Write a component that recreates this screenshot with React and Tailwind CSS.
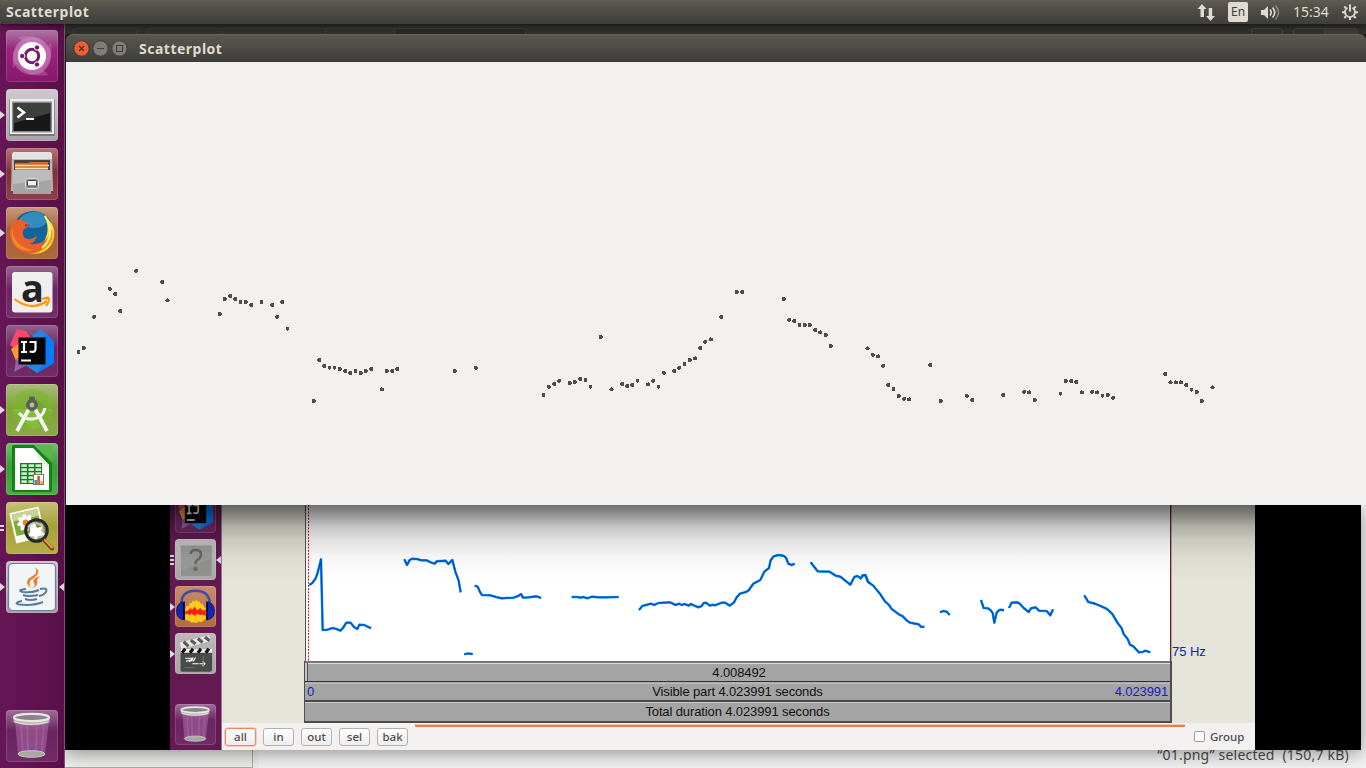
import React from "react";

const SAMPLES = [
  { x: 66, y: 250, pts: [[37,306],[53,294],[84,200],[131,116],[147,132],[162,183],[210,62],[288,96],[304,151],[461,192],[476,147],[492,138],[507,147],[523,156],[539,156],[555,165],[586,156],[618,165],[633,200],[648,156],[664,236],[743,453],[759,330],[774,348],[790,353],[805,353],[821,357],[837,363],[852,369],[868,363],[884,369],[899,363],[915,357],[947,418],[962,363],[978,363],[993,357],[1166,363]] },
  { x: 460, y: 270, pts: [[47,293],[250,375],[266,350],[282,342],[297,332],[329,339],[344,336],[360,327],[376,330],[391,350],[422,201],[454,358],[486,342],[501,348],[516,345],[532,332],[564,343],[579,332],[595,350],[611,308],[642,303],[657,293],[673,282],[689,270],[705,265],[720,234],[735,215],[752,208],[783,141],[830,66],[846,66],[971,87],[987,149],[1002,153],[1018,165],[1034,165],[1049,165],[1065,180],[1080,187],[1097,195],[1112,228]] },
  { x: 840, y: 330, pts: [[82,55],[98,74],[114,79],[129,107],[144,165],[160,177],[176,198],[192,206],[207,208],[270,105],[302,213],[380,197],[396,210],[489,195],[552,185],[567,187],[584,210],[661,191],[677,153],[693,153],[708,156],[725,187],[756,185],[771,187],[787,197],[803,195],[819,203],[975,132],[991,157],[1007,157],[1022,157],[1038,165],[1054,179],[1070,186],[1085,213],[1117,172]] },
];

const CURVES = [
  { x: 160, y: 500, lines: ["448,255 457,249 467,235 473,218 483,178 488,390 503,389 517,384 530,387 541,392 549,384 559,368 572,368 582,381 592,387 598,374 613,375 633,385", "733,178 741,195 749,180 757,176 775,178 785,181 800,181 812,187 824,191 830,184 857,182 865,192 877,180 886,215 896,242 902,277", "913,463 920,461 932,461 938,463"] },
  { x: 470, y: 500, lines: ["14,257 23,260 30,276 36,285 62,286 78,291 95,295 130,293 145,288 153,282 159,293 176,292 200,289 213,294", "305,291 323,291 331,293 340,291 352,295 366,290 385,292 410,292 446,291", "507,330 517,318 543,311 553,315 565,309 600,307 617,315 627,311 635,315 644,312 656,317 662,312 685,322 695,318 700,310 708,308 720,317 728,314 735,316 755,308 765,308 779,317 792,307 800,292 810,281 828,276 836,271 850,251 871,240 883,215 897,204 902,181 911,169 925,165 940,167 948,173 955,191 965,195 974,191", "1022,187 1043,214 1078,215 1097,227 1111,230 1141,254 1153,231 1162,228 1173,235 1179,226 1187,226 1194,244 1200,250"] },
  { x: 860, y: 500, lines: ["0,237 8,226 16,225 24,246 40,257 61,283 75,304 87,315 94,326 118,344 127,348 141,362 150,368 176,373 184,381 193,380", "240,337 250,333 260,335 269,345", "363,300 371,324 384,325 392,331 398,339 403,368 410,338 418,330 424,329 432,331", "447,324 455,308 472,307 479,311 491,324 506,336 513,325 527,322 537,332 560,333 571,346 579,328", "673,286 685,306 705,311 724,319 741,327 757,342 773,369 785,385 791,402 803,417 810,434 820,439 837,457 848,456 856,452 871,457"] },
];

const IntelliJ = () => (
  <>
    <path d="M11 4 20 6 26 15 14 28 4 20Z" fill="#fb476c" />
    <path d="M5 24 14 18 17 32 10 36Z" fill="#f89a2d" />
    <path d="M12 33 34 33 8 47 10 35Z" fill="#95629f" />
    <path d="M26 10 35 4 48 16 48 38 31 48 19 40 35 38Z" fill="#2c83dc" />
    <path d="M39 9 48 16 48 38 31 48 38 38Z" fill="#087cf8" />
    <rect x="12.5" y="12.5" width="27" height="27" fill="#050505" />
    <path d="M15 17h6M18 17v10M15 27h6M23.5 17h6v7q0 4-6 2.5" fill="none" stroke="#fff" strokeWidth="2.2" />
    <path d="M15 35.5h10" stroke="#fff" strokeWidth="2" />
  </>
);

const TrashIcon = () => (
  <>
    <path d="M9 11 43 11 39 44Q26 50 12 44Z" fill="#c989c7" opacity=".38" />
    <path d="M15 14 17 42M21 14l1 28M31 14l-1 28M38 14l-2 28" stroke="#e5bddf" opacity=".14" strokeWidth="2" />
    <ellipse cx="25.5" cy="44" rx="13.5" ry="3.3" fill="#a9a7a2" stroke="#cdc9c4" />
    <path d="M7.5 8V12.5Q26 18 43.500 12.500V8" fill="#b5b4af" />
    <ellipse cx="25.500" cy="7.500" rx="17.500" ry="3.600" fill="#8b818a" stroke="#e8e7e3" strokeWidth="2.200" />
    <path d="M9 12Q25 16.500 42 12" fill="none" stroke="#e4e4e0" strokeWidth="1.200" />
  </>
);

const ICONS = {
  ubuntu: (
    <>
      <circle cx="26" cy="26" r="19" fill="#d8a1d0" opacity=".38" />
      <path d="M7 38Q3 10 31 7Q13 13 15 30ZM45 13Q49 41 22 45Q38 38 37 20ZM12 7Q39 1 45 27Q35 12 18 14ZM42 45Q14 49 7 24Q19 39 35 37Z" fill="#dda9d4" opacity=".28" />
      <circle cx="26" cy="26" r="14" fill="#fff" />
      <circle cx="26" cy="26" r="6.7" fill="none" stroke="#761a68" strokeWidth="3" />
      <g fill="#761a68" stroke="#fff" strokeWidth="1"><circle cx="16.2" cy="26" r="2.7" /><circle cx="31" cy="17.5" r="2.7" /><circle cx="31" cy="34.5" r="2.7" /></g>
    </>
  ),
  terminal: (
    <>
      <rect x="3" y="10" width="46" height="37" rx="1.5" fill="#777" />
      <rect x="3.8" y="10" width="44.4" height="35" fill="#eee" />
      <rect x="6" y="12.5" width="40" height="31" fill="#8a8a8a" />
      <rect x="7.5" y="14" width="37" height="28" fill="#171817" />
      <path d="M8 14H44V24L8 34Z" fill="#575a57" opacity=".6" />
      <path d="m11.5 18.500 6.500 5-6.500 5" fill="none" stroke="#fff" strokeWidth="2.500" />
      <path d="M20 30h8" stroke="#fff" strokeWidth="2" />
    </>
  ),
  files: (
    <>
      <path d="M6 5.500 8 4H44L46 5.500 47 43H5Z" fill="#b8b8b8" />
      <path d="M6 5.500 8 4H44L46 5.500V11H6Z" fill="#e3e3e3" />
      <rect x="8" y="12" width="36" height="16" fill="#46423f" />
      <path d="M9 15H22L24 14H42V23H9Z" fill="#df6525" />
      <path d="M9 17.500H43M9 20.500H42" stroke="#ffe1b1" strokeWidth="1.300" />
      <path d="M7 22H45V46H7Z" fill="#a5a5a5" />
      <path d="M7 22H45V32L7 36Z" fill="#bcbcbc" />
      <rect x="19.500" y="30.500" width="13" height="10" rx="2" fill="#8a8a8a" stroke="#ddd" />
      <rect x="21.500" y="32.500" width="9" height="5.500" rx="1" fill="#efefef" stroke="#444" />
    </>
  ),
  firefox: (
    <>
      <circle cx="27" cy="24" r="20" fill="#14639c" />
      <ellipse cx="28" cy="13" rx="13" ry="8" fill="#49a7d6" opacity=".6" />
      <path d="M38 9Q50 17 48 30C46 43 34 49 23 46Q38 40 41 27Q43 18 38 9Z" fill="#ffdd3d" />
      <path d="M46 22Q49 33 41 40Q34 47 23 47Q37 41 41 31Z" fill="#ef991e" />
      <path d="M18 7Q15 11 16 14L22 16Q25 19 18 22Q15 27 19 31Q25 34 31 29Q30 34 24 37Q36 38 41 31C40 44 27 50 15 44C4 39 1 26 7 16L8 12 13 13Z" fill="#e9602a" />
      <path d="M7 18Q5 28 11 35Q17 42 28 43Q18 46 10 39Q3 30 7 18Z" fill="#f08a30" />
      <path d="M39 9Q45 17 44 28Q42 36 36 41" fill="none" stroke="#fff08a" strokeWidth="2" />
      <path d="M19 17 24 18 19 20Z" fill="#9b3d26" />
    </>
  ),
  amazon: (
    <>
      <rect x="6" y="6" width="40.5" height="40.5" rx="3" fill="#efefee" />
      <path d="M8.5 33Q25 46 41 35" fill="none" stroke="#ff9900" strokeWidth="2.2" />
      <path d="M36 33Q43 30 43 33Q43 37 40 40M36 33Q40 32 43 33" fill="none" stroke="#ff9900" strokeWidth="1.8" />
    </>
  ),
  intellij: <IntelliJ />,
  android: (
    <>
      <circle cx="26" cy="25" r="20" fill="#78b72a" opacity=".6" />
      <path d="M6 25H46A20 20 0 0 1 26 45Z" fill="#8ac43b" opacity=".6" />
      <path d="M31 15 45 29Q43 39 34 43L26 23Z" fill="#598c22" opacity=".25" />
      <path d="M23 25 11 47M29 25 41 47" stroke="#f5f5f3" strokeWidth="3.8" />
      <path d="M13 29Q19 36 27 35Q37 34 39 24" fill="none" stroke="#f1f1ee" strokeWidth="3.2" />
      <rect x="23" y="12.5" width="6" height="6" rx="1" fill="#5d5d59" />
      <circle cx="26" cy="21" r="4.2" fill="#a9c783" stroke="#5d5d5c" strokeWidth="3.5" />
    </>
  ),
  calc: (
    <>
      <path d="M6 4Q6 2 8 2H28L46 20V47Q46 49 44 49H8Q6 49 6 47Z" fill="#128314" />
      <path d="M30 2H44Q46 2 46 4V17Z" fill="#56b947" />
      <path d="M9 5H27L43 22V47H9Z" fill="#fff" />
      <path d="M27 5 43 22 43 25 33 17Z" fill="#e3eee0" />
      <rect x="14" y="20" width="22" height="21" fill="#107b1b" />
      <g fill="#d7efd3">{[21.3, 25.3, 29.3, 33.3, 37.3].flatMap((y) => [15.3, 22.5, 29.5].map((x) => <rect key={`${x}-${y}`} x={x} y={y} width="5.6" height="2.6" />))}</g>
      <rect x="27.5" y="31.5" width="10" height="10" fill="#fff" stroke="#777" />
      <path d="M29.7 41v-4" stroke="#3488c8" strokeWidth="2.5" /><path d="M32.6 41v-8" stroke="#d45d24" strokeWidth="2.7" /><path d="M35.6 41v-3" stroke="#e6ad22" strokeWidth="2.5" />
    </>
  ),
  viewer: (
    <>
      <g transform="rotate(-13 23 21)">
        <rect x="6" y="7" width="30" height="31" fill="#f8f8ec" />
        <rect x="8" y="9" width="26" height="22" fill="#83ab3b" />
        <path d="M8 9h26v7H8Z" fill="#c8d29a" />
        <g fill="#fff"><ellipse cx="20" cy="20" rx="3" ry="9" /><ellipse cx="20" cy="20" rx="9" ry="3" /><ellipse cx="20" cy="20" rx="3" ry="9" transform="rotate(45 20 20)" /><ellipse cx="20" cy="20" rx="3" ry="9" transform="rotate(-45 20 20)" /></g>
        <circle cx="20" cy="20" r="3.2" fill="#e88b17" />
      </g>
      <circle cx="30.5" cy="28.5" r="10.6" fill="#66753f" opacity=".45" />
      <path d="m24 24 5-3 2 5 6-2-2 5 4 4-7 1-2 4-3-4-5 1 2-5Z" fill="#fff" />
      <circle cx="30.5" cy="28.5" r="10.8" fill="none" stroke="#24292b" strokeWidth="3" />
      <path d="M22 25Q28 17 37 25" fill="none" stroke="#c7ccbc" strokeWidth="1.5" />
      <path d="m38.500 38.500 7.500 8" stroke="#754016" strokeWidth="4" strokeLinecap="round" />
      <path d="m39 38 7 7.500" stroke="#e3a04c" strokeWidth="2" strokeLinecap="round" />
    </>
  ),
  java: (
    <>
      <rect x="2.500" y="2.500" width="47" height="47" rx="4" fill="#f2f4f5" stroke="#68839a" strokeWidth="1.200" />
      <path d="M29 6Q33 12 25 16Q17 21 25 27Q21 20 28 17Q36 11 29 6ZM34 15Q25 18 28 22Q30 25 26 28Q33 24 31 20Q31 18 34 15Z" fill="#ee7b25" />
      <g fill="none" stroke="#557c9b" strokeWidth="2"><path d="M20 28Q10 29 17 31Q27 32 33 29" /><path d="M17 34Q22 36 32 34M19 38Q24 40 31 38" /><path d="M34 28Q42 26 40 31Q38 34 33 35" /><path d="M16 40Q7 42 13 43.500Q28 45 37 41" /></g>
    </>
  ),
  trash: <TrashIcon />,
  unknown: (
    <>
      <rect x="7" y="8" width="40" height="40" rx="2" fill="#929391" stroke="#b7b8b6" />
      <path d="M8 9H46V25L8 40Z" fill="#a0a19f" opacity=".6" />
      <path d="M20 19Q20 14 26 14Q33 14 33 20Q33 24 28 27Q26 29 26 32" fill="none" stroke="#696a68" strokeWidth="3.2" /><circle cx="26" cy="38" r="2.8" fill="#696a68" />
    </>
  ),
  audacity: (
    <>
      <path d="M8 31V23Q8 6 26 6Q44 6 44 23V31" fill="none" stroke="#3a4da8" strokeWidth="3.2" />
      <path d="M13 29 15 25 17 26 19 21 21 22 23 18 25 20 27 17 29 20 31 19 33 23 35 22 37 27 39 28V42L36 44 33 46 30 45 27 47 24 46 21 47 18 44 13 43Z" fill="#ffc91d" />
      <path d="m13 32 4-1 2-3 3 2 3-4 3 5 4-3 3 3 4-1v8l-4-2-3 1-4-2-3 3-4-3-3 2-2-2-3 1Z" fill="#f81f18" />
      <path d="M12 20V43Q2 42 2 32Q2 21 12 20ZM40 20V43Q50 42 50 32Q50 21 40 20Z" fill="#1328b1" stroke="#060d60" />
      <path d="M11 21v22M41 21v22" stroke="#0d0b35" strokeWidth="2" />
    </>
  ),
  clapper: (
    <>
      <path d="M7 20H47V47Q47 49 44 49H9Q7 49 7 47Z" fill="#494b48" />
      <path d="M6 12 43 3 46 10 8 20Z" fill="#e7e7e5" />
      <path d="m11 11 6 6M20 9l6 5M29 7l6 5M38 5l6 5" stroke="#5a5c59" strokeWidth="4" />
      <path d="M7 20H47V25H7Z" fill="#f3f3ef" /><path d="m13 20-4 5M23 20l-4 5M33 20l-4 5M43 20l-4 5" stroke="#111" strokeWidth="4" />
      <path d="M13 32h9l-4 5M23 31l-2 5M26 31l-3 5M14 36l6-2M22 39h8M31 39h6M35 36l3 3-3 3" stroke="#fff" fill="none" strokeWidth="1.4" />
      <path d="M12 44h14M36 29v14" stroke="#777" />
    </>
  ),
};

const LAUNCHER = [
  { id: "ubuntu", tile: "bg-[linear-gradient(#a87ba4,#9c237d_38%,#86196d)]" },
  { id: "terminal", tile: "bg-[linear-gradient(#d0c8cf,#aaa3aa)]", mark: 1 },
  { id: "files", tile: "bg-[linear-gradient(#b57476,#803137_45%,#8f404a)]", mark: 1 },
  { id: "firefox", tile: "bg-[linear-gradient(#c69b7d,#a66136_45%,#ad6a3c)]", mark: 1 },
  { id: "amazon", tile: "bg-[linear-gradient(#96688f,#6b2462_45%,#723068)]" },
  { id: "intellij", tile: "bg-[linear-gradient(#92628b,#6a225f_45%,#712d68)]" },
  { id: "android", tile: "bg-[linear-gradient(#a7bd79,#7fa33a_45%,#8aab43)]", mark: 1 },
  { id: "calc", tile: "bg-[linear-gradient(#75bd70,#38a035_45%,#4bad43)]", mark: 1 },
  { id: "viewer", tile: "bg-[linear-gradient(#c6c279,#a4a13a_45%,#b4ad49)]", mark: 2 },
  { id: "java", tile: "bg-[linear-gradient(#cbbfca,#aa9ca8)]", mark: 1, active: true },
];

const INNER_LAUNCHER = [
  { id: "unknown", tile: "bg-[linear-gradient(#cbc8c9,#aaa5a8)]", mark: 2, active: true },
  { id: "audacity", tile: "bg-[linear-gradient(#c88c69,#b06a43)]", mark: 1 },
  { id: "clapper", tile: "bg-[linear-gradient(#bdb6bb,#aaa3a8)]", mark: 1 },
];

const TRASH = { id: "trash", tile: "bg-[linear-gradient(#9e6d98,#6b2460_40%,#712b67)]" };

function Tile({ item, small }) {
  return (
    <div className={`flex w-full shrink-0 items-center ${small ? "h-[41px]" : "h-[52px]"}`}>
      <div className={`flex shrink-0 flex-col items-start justify-center gap-[2px] ${small ? "w-[5px]" : "w-[6px]"}`}>
        {item.mark === 1 && <svg width="5" height="8" viewBox="0 0 5 8"><path d="M0 0 5 4 0 8Z" fill="#ddd6dd" /></svg>}
        {item.mark === 2 && <><div className="h-[2px] w-[4px] bg-[#ddd6dd]" /><div className="h-[2px] w-[4px] bg-[#ddd6dd]" />{small && <div className="h-[2px] w-[4px] bg-[#ddd6dd]" />}</>}
      </div>
      <div className={`relative shrink-0 rounded-[4px] shadow-[inset_0_0_0_1px_rgba(255,255,255,0.14)] ${small ? "size-[41px]" : "size-[52px]"} ${item.tile}`}>
        <svg className="block size-full" viewBox="0 0 52 52">{ICONS[item.id]}</svg>
        {item.id === "amazon" && <span className="absolute top-[-1px] left-[15px] font-['Open_Sans',sans-serif] text-[38px] leading-[44px] font-bold text-[#242424]">a</span>}
      </div>
      {item.active && <svg className="ml-auto shrink-0" width="5" height="8" viewBox="0 0 5 8"><path d="M5 0 0 4 5 8Z" fill="#ddd6dd" /></svg>}
    </div>
  );
}

function TopPanel() {
  return (
    <header className="relative z-20 flex h-[24px] shrink-0 items-center bg-[linear-gradient(#605e53,#504e47_35%,#3f3e39)] pr-[7px] pl-[6px] text-[#dfdbd2] shadow-[0_1px_7px_rgba(0,0,0,0.65)]">
      <span className="text-[14px] leading-[24px] font-bold tracking-[0.5px]">Scatterplot</span>
      <div className="ml-auto flex h-full items-center">
        <svg width="19" height="17" viewBox="0 0 19 17" fill="#dfdbd2"><path d="M5 0 9.500 5H7V13H3.500V5H.5ZM13.500 17 9 12h2.700V4h3.500v8H18Z" /></svg>
        <div className="ml-[12px] flex h-[20px] w-[20px] items-center justify-center rounded-[2px] bg-[#dfdbd2] text-[12px] leading-none text-[#3e3d39]">En</div>
        <svg className="ml-[12px]" width="22" height="17" viewBox="0 0 22 17" fill="none" stroke="#dfdbd2" strokeWidth="1.6"><path d="M1 6h3l4-4v13l-4-4H1Z" fill="#dfdbd2" stroke="none" /><path d="M10 5.500q2.500 3 0 6M12.500 3.500q4.500 5 0 10" /><path d="M15.500 1.500q6 7 0 14" opacity=".4" /></svg>
        <span className="ml-[11px] w-[38px] text-[14px] leading-[24px]">15:34</span>
        <svg className="ml-[10px]" width="18" height="18" viewBox="0 0 18 18" fill="none" stroke="#dfdbd2"><path d="M6.500 4.700A5 5 0 1 0 11.500 4.700" strokeWidth="1.800" /><path d="M9 1.500v7" strokeWidth="2" /><path d="M3.300 3.600 5 5.200M14.700 3.600 13 5.200M1 9.300h3M14 9.300h3M3.300 15 5 13.300M14.700 15 13 13.300M9 14v3" strokeWidth="2" /></svg>
      </div>
    </header>
  );
}

function PlotWindow() {
  return (
    <section className="absolute top-[10px] left-[1px] flex h-[471px] w-[1300px] flex-col">
      <div className="flex h-[28px] shrink-0 items-center rounded-t-[7px] border-t border-[#69665a] bg-[linear-gradient(#5a574e,#3e3d39)] pl-[7px]">
        <svg width="56" height="18" viewBox="0 0 56 18">
          <circle cx="8.500" cy="8.500" r="7.700" fill="#ed6035" stroke="#403c36" /><path d="m6 6 5 5M11 6l-5 5" stroke="#4e2b20" strokeWidth="1.200" />
          <circle cx="27.500" cy="8.500" r="7.700" fill="#7f7d75" stroke="#403e39" /><path d="M24 8.500h7" stroke="#403e39" />
          <circle cx="46.500" cy="8.500" r="7.700" fill="#7f7d75" stroke="#403e39" /><rect x="43.500" y="5.500" width="6" height="6" fill="none" stroke="#403e39" />
        </svg>
        <span className="ml-[10px] text-[14px] font-bold tracking-[0.5px] text-[#dfdbd2]">Scatterplot</span>
      </div>
      <div className="h-[443px] bg-[#f2f1f0]">
        <svg className="block" width="1300" height="443" viewBox="66 62 1300 443" shapeRendering="crispEdges">
          {SAMPLES.map((s) => s.pts.map(([x, y]) => <circle key={`${s.x}-${x}-${y}`} cx={s.x + x / 3 + 0.2} cy={s.y + y / 3 + 0.1} r="2.05" fill="#4d4d4d" />))}
        </svg>
      </div>
    </section>
  );
}

function PitchEditor() {
  return (
    <div className="flex h-full w-[1033px] flex-col bg-[#e4e4d8]">
      <div className="flex h-[218px] shrink-0">
        <div className="flex w-[950px] flex-col pl-[82px]">
          <div className="h-[156px] w-[868px] bg-white">
            <svg className="block" width="868" height="156" viewBox="304 505 868 156">
              <path d="M304 505h1.500v156H304Z" fill="#e4e4d8" />
              <path d="M305.500 505V661" stroke="#555" strokeWidth="1" />
              <path d="M308.500 505V661" stroke="#e30d20" strokeDasharray="2 1.2" />
              <path d="M1170.500 505V661" stroke="#8c1020" />
              <path d="M1171.500 505V661" stroke="#8bb5ac" />
              {CURVES.map((c) => (
                <g key={c.x} transform={`translate(${c.x} ${c.y}) scale(.33333)`} fill="none" strokeLinejoin="round">
                  {c.lines.map((points) => <g key={points}><polyline points={points} stroke="#1ea8ef" strokeWidth="7.500" /><polyline points={points} stroke="#0054d2" strokeWidth="5" /></g>)}
                </g>
              ))}
            </svg>
          </div>
          <div className="flex h-[62px] w-[868px] flex-col border-r-2 border-l border-[#4d4d4d] bg-[#a4a4a4] font-['Liberation_Sans',sans-serif] text-[13px] tracking-[-0.12px] text-[#111]">
            <div className="flex h-[21px] items-center justify-center border-t-2 border-b border-t-[#777] border-b-[#333] shadow-[inset_0_1px_0_#ddd]"><div className="h-full w-[3px] border-r border-[#555] bg-[#c2c2c2]" /><span className="flex-1 text-center leading-[17px]">4.008492</span></div>
            <div className="flex h-[20px] items-center border-t border-b-2 border-t-[#aaa] border-b-[#494949] px-[2px] leading-[17px] shadow-[inset_0_1px_0_#bbb]"><span className="w-[80px] text-[#1420ba]">0</span><span className="flex-1 text-center">Visible part 4.023991 seconds</span><span className="w-[80px] text-right text-[#1420ba]">4.023991</span></div>
            <div className="flex h-[21px] items-center justify-center border-b-2 border-[#4b4b4b] leading-[18px] shadow-[inset_0_1px_0_#ccc]">Total duration 4.023991 seconds</div>
          </div>
        </div>
        <div className="flex flex-col justify-start pt-[138px] font-['Liberation_Sans',sans-serif] text-[13px] leading-[18px] tracking-[-0.05px] text-[#1420ba]">75 Hz</div>
      </div>
      <div className="flex h-[27px] shrink-0 items-start bg-[#f2f1f0] text-[11.5px] text-[#4c4c4c]">
        <div className="flex gap-[7px] pt-[5px] pl-[3px]">
          {["all", "in", "out", "sel", "bak"].map((label) => <button key={label} className={`flex h-[18px] w-[31px] items-center justify-center rounded-[3px] border bg-[linear-gradient(#fff,#ededed)] leading-none font-medium ${label === "all" ? "border-[#ee8565] shadow-[0_0_0_0.5px_#f3a58d]" : "border-[#b3b1ae]"}`}>{label}</button>)}
        </div>
        <div className="mt-[1px] ml-[7px] h-[3px] w-[770px] border-t border-[#f7c3b2] bg-[#f57950]" />
        <div className="flex h-[27px] items-center pl-[9px]"><span className="size-[11px] rounded-[2px] border border-[#999] bg-white" /><span className="ml-[5px] text-[11.5px] font-medium">Group</span></div>
      </div>
    </div>
  );
}

function ImageViewer() {
  return (
    <section className="absolute top-[481px] left-[0px] flex h-[245px] w-[1296px] bg-black shadow-[0_3px_18px_rgba(0,0,0,0.42)]">
      <div className="w-[105px] shrink-0" />
      <div className="flex w-[52px] shrink-0 flex-col border-r border-[#937590] bg-[#651952]">
        <div className="flex h-[28px] items-end overflow-hidden"><Tile item={{ id: "intellij", tile: "bg-[#712b65]" }} small /></div>
        <div className="mt-[6px] flex flex-col gap-[6px]">{INNER_LAUNCHER.map((i) => <Tile key={i.id} item={i} small />)}</div>
        <div className="mt-[30px]"><Tile item={TRASH} small /></div>
      </div>
      <PitchEditor />
      <div className="absolute top-0 left-[105px] h-[75px] w-[1085px] bg-[linear-gradient(rgba(0,0,0,0.56),rgba(0,0,0,0.44)_12%,rgba(0,0,0,0.24)_28%,rgba(0,0,0,0.12)_46%,rgba(0,0,0,0.04)_70%,transparent)]" />
    </section>
  );
}

export default function App() {
  return (
    <div className="flex h-[768px] w-[1366px] flex-col overflow-hidden bg-[#292927] font-['Noto_Sans','Open_Sans',sans-serif]">
      <TopPanel />
      <div className="flex h-[744px]">
        <nav className="z-10 flex w-[65px] shrink-0 flex-col border-r border-[#815078] bg-[linear-gradient(90deg,#661657,#591047)] pt-[6px] pb-[6px]">
          <div className="flex flex-col gap-[7px]">{LAUNCHER.map((i) => <Tile key={i.id} item={i} />)}</div>
          <div className="mt-auto"><Tile item={TRASH} /></div>
        </nav>
        <main className="relative flex w-[1301px] flex-col justify-between bg-[#20201e]">
          <div className="flex h-[10px] items-end bg-[#30302c] px-[8px]">
            <div className="h-[6px] w-[64px] rounded-t border border-b-0 border-[#3c3b36]" />
            <div className="ml-[10px] h-[6px] w-[76px] rounded-tl border-t border-r border-l border-[#3c3b36]" />
            <div className="h-[6px] w-[103px] border-t border-r border-[#3c3b36]" />
            <div className="h-[6px] w-[70px] border-t border-r border-[#3c3b36]" />
            <div className="h-[6px] w-[130px] rounded-tr border-t border-r border-[#3c3b36] bg-[#282825]" />
            <div className="ml-auto h-[6px] w-[32px] rounded-t border border-b-0 border-[#464540]" />
            <div className="ml-[10px] h-[6px] w-[32px] rounded-tl border border-b-0 border-[#464540]" />
            <div className="h-[6px] w-[33px] rounded-tr border-t border-r border-[#464540] bg-[#3b3a35]" />
          </div>
          <div className="flex h-[263px] items-end bg-[#ededed]">
            <div className="h-full w-[188px] border-r border-b border-[#aaa] bg-[#ededeb]" />
            <div className="ml-[6px] flex h-full flex-1 items-end justify-end bg-[#f3f3f3] pr-[17px] text-[14px] leading-[20px] tracking-[0.22px] whitespace-pre text-[#4c4c4c]"><span className="mb-[3px]">“01.png” selected  (150,7 kB)</span></div>
          </div>
          <ImageViewer />
          <PlotWindow />
        </main>
      </div>
    </div>
  );
}
